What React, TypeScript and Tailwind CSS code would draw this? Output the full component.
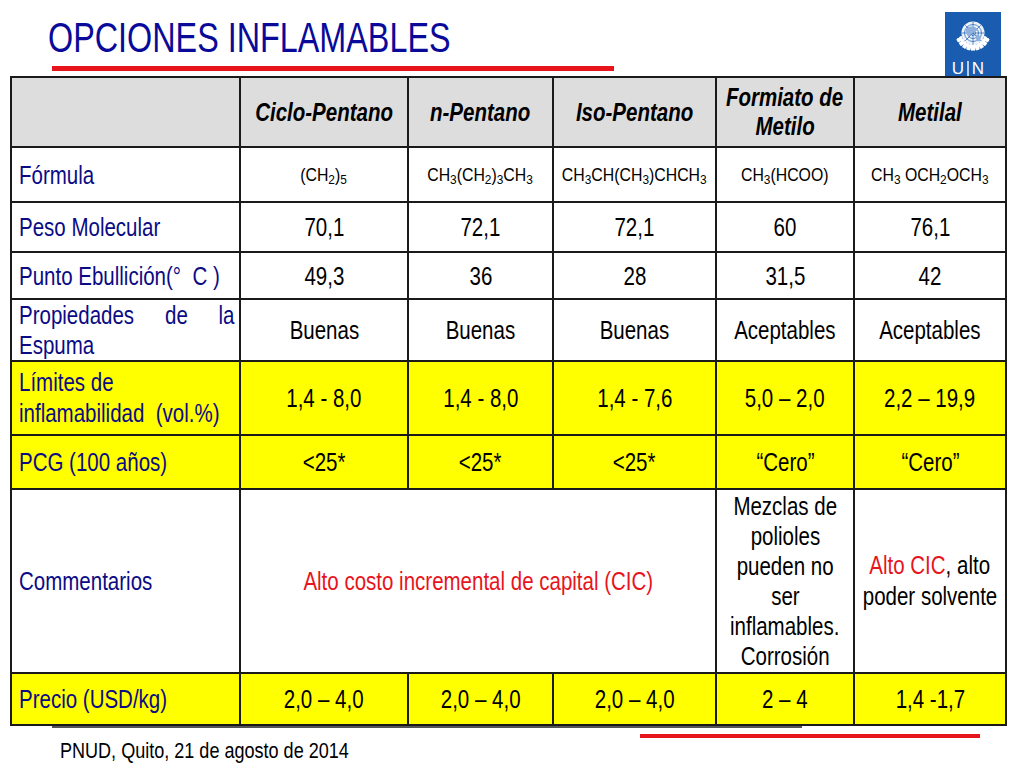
import React from "react";

const FONT = '"Liberation Sans", Arial, sans-serif';

function UNLogo() {
  const leaves: React.ReactNode[] = [];
  for (let side = -1; side <= 1; side += 2) {
    for (let i = 0; i < 9; i++) {
      const deg = 115 + i * 16;
      const a = deg * (Math.PI / 180);
      const r = 14.5;
      const x = side * Math.sin(a) * r;
      const y = -Math.cos(a) * r;
      leaves.push(
        <ellipse
          key={`${side}-${i}`}
          cx={x}
          cy={y}
          rx={1.7}
          ry={3.6}
          fill="white"
          transform={`rotate(${side * (deg + 30)} ${x} ${y})`}
        />
      );
    }
  }
  const radials = [0, 45, 90, 135, 180, 225, 270, 315].map((d) => {
    const a = (d * Math.PI) / 180;
    return (
      <line
        key={d}
        x1={0}
        y1={0}
        x2={Math.cos(a) * 11}
        y2={Math.sin(a) * 11}
        stroke="#1a5db0"
        strokeWidth={0.7}
      />
    );
  });
  return (
    <svg width="56" height="64" viewBox="0 0 56 64">
      <rect width="56" height="64" fill="#1a5db0" />
      <g transform="translate(28,21)">
        <circle r="11.5" fill="#eef3fa" />
        <circle r="8.5" fill="none" stroke="#1a5db0" strokeWidth="0.7" />
        <circle r="5.5" fill="none" stroke="#1a5db0" strokeWidth="0.7" />
        <circle r="2.5" fill="none" stroke="#1a5db0" strokeWidth="0.7" />
        {radials}
        <path d="M-7 -4 C-4 -8 2 -7 5 -3 C2 -1 -1 0 -3 3 C-6 2 -8 -1 -7 -4 Z" fill="#8fb0dc" />
        <path d="M3 2 C6 1 9 4 7 8 C4 9 2 6 3 2 Z" fill="#8fb0dc" />
        {leaves}
        <path d="M-6 15 Q0 12 6 15" stroke="white" strokeWidth="1.2" fill="none" />
      </g>
      <line x1="23" y1="49" x2="23" y2="64" stroke="white" strokeWidth="1.4" />
      <text x="13" y="61.5" fill="white" fontSize="17" fontFamily='"Liberation Sans", Arial, sans-serif' textAnchor="middle">U</text>
      <text x="33" y="61.5" fill="white" fontSize="17" fontFamily='"Liberation Sans", Arial, sans-serif' textAnchor="middle">N</text>
    </svg>
  );
}

/* narrow text: the reference uses a condensed face; emulate it by compressing horizontally */
function C({ children }: { children: React.ReactNode }) {
  return <span className="inline-block whitespace-nowrap scale-x-[0.82] origin-center">{children}</span>;
}
function L({ children }: { children: React.ReactNode }) {
  return <span className="inline-block whitespace-nowrap scale-x-[0.82] origin-left">{children}</span>;
}
function R({ children }: { children: React.ReactNode }) {
  return <span className="inline-block whitespace-nowrap scale-x-[0.82] origin-right">{children}</span>;
}
function F({ children }: { children: React.ReactNode }) {
  return <span className="inline-block whitespace-nowrap scale-x-[0.88] origin-center">{children}</span>;
}

const cellBase = "border-2 border-[#1a1a1a] align-middle";
const lbl = "border-2 border-[#1a1a1a] align-middle pl-[7px] pr-[5px] text-[#0b0b85]";

function V({ children }: { children: React.ReactNode }) {
  return (
    <td className={cellBase}>
      <div className="flex justify-center">
        <C>{children}</C>
      </div>
    </td>
  );
}

function Lines({ lines }: { lines: React.ReactNode[] }) {
  return (
    <div className="flex flex-col items-center">
      {lines.map((l, i) => (
        <C key={i}>{l}</C>
      ))}
    </div>
  );
}

function Formula({ children }: { children: React.ReactNode }) {
  return (
    <td className={`${cellBase} text-[18px] leading-[24px]`}>
      <div className="flex justify-center">
        <F>{children}</F>
      </div>
    </td>
  );
}

function Label({ children }: { children: React.ReactNode }) {
  return (
    <td className={lbl}>
      <div className="flex">
        <L>{children}</L>
      </div>
    </td>
  );
}

export default function App() {
  return (
    <div className="w-[1024px] h-[768px] bg-white overflow-hidden text-black" style={{ fontFamily: FONT }}>
      <div className="flex h-[76px]">
        <div className="flex flex-col pl-[48px] pt-[17px]">
          <h1 className="flex text-[42px] leading-[42px] text-[#0a0a9a]">
            <span className="inline-block whitespace-nowrap scale-x-[0.77] origin-left">OPCIONES INFLAMABLES</span>
          </h1>
          <div className="ml-[4px] mt-[7px] w-[562px] h-[5px] bg-[#e8141c]" />
        </div>
        <div className="ml-auto mr-[23px] mt-[12px]">
          <UNLogo />
        </div>
      </div>

      <table className="ml-[10px] w-[995px] table-fixed border-collapse border-2 border-[#333] text-[25px] leading-[30px]">
        <colgroup>
          <col className="w-[229px]" />
          <col className="w-[168px]" />
          <col className="w-[145px]" />
          <col className="w-[163px]" />
          <col className="w-[138px]" />
          <col className="w-[152px]" />
        </colgroup>
        <tbody>
          <tr className="h-[70px] bg-[#dddddd] font-bold italic leading-[29px]">
            <td className={cellBase}></td>
            <V>Ciclo-Pentano</V>
            <V>n-Pentano</V>
            <V>Iso-Pentano</V>
            <td className={cellBase}>
              <Lines lines={["Formiato de", "Metilo"]} />
            </td>
            <V>Metilal</V>
          </tr>
          <tr className="h-[55px]">
            <Label>Fórmula</Label>
            <Formula>
              (CH<sub>2</sub>)<sub>5</sub>
            </Formula>
            <Formula>
              CH<sub>3</sub>(CH<sub>2</sub>)<sub>3</sub>CH<sub>3</sub>
            </Formula>
            <Formula>
              CH<sub>3</sub>CH(CH<sub>3</sub>)CHCH<sub>3</sub>
            </Formula>
            <Formula>
              CH<sub>3</sub>(HCOO)
            </Formula>
            <Formula>
              CH<sub>3</sub> OCH<sub>2</sub>OCH<sub>3</sub>
            </Formula>
          </tr>
          <tr className="h-[50px]">
            <Label>Peso Molecular</Label>
            <V>70,1</V>
            <V>72,1</V>
            <V>72,1</V>
            <V>60</V>
            <V>76,1</V>
          </tr>
          <tr className="h-[47px]">
            <td className={lbl}>
              <div className="flex">
                <span className="inline-block whitespace-pre scale-x-[0.82] origin-left">{"Punto Ebullición(°  C )"}</span>
              </div>
            </td>
            <V>49,3</V>
            <V>36</V>
            <V>28</V>
            <V>31,5</V>
            <V>42</V>
          </tr>
          <tr className="h-[61px]">
            <td className={`${lbl} leading-[30px]`}>
              <div className="flex flex-col">
                <div className="flex">
                  <L>Propiedades</L>
                  <div className="ml-[6px] flex">
                    <L>de</L>
                  </div>
                  <div className="ml-auto flex">
                    <R>la</R>
                  </div>
                </div>
                <div className="flex">
                  <L>Espuma</L>
                </div>
              </div>
            </td>
            <V>Buenas</V>
            <V>Buenas</V>
            <V>Buenas</V>
            <V>Aceptables</V>
            <V>Aceptables</V>
          </tr>
          <tr className="h-[74px] bg-[#ffff00]">
            <td className={`${lbl} leading-[31px]`}>
              <div className="flex flex-col items-start">
                <L>Límites de</L>
                <span className="inline-block whitespace-pre scale-x-[0.82] origin-left">{"inflamabilidad  (vol.%)"}</span>
              </div>
            </td>
            <V>1,4 - 8,0</V>
            <V>1,4 - 8,0</V>
            <V>1,4 - 7,6</V>
            <V>5,0 – 2,0</V>
            <V>2,2 – 19,9</V>
          </tr>
          <tr className="h-[54px] bg-[#ffff00]">
            <Label>PCG (100 años)</Label>
            <V>&lt;25*</V>
            <V>&lt;25*</V>
            <V>&lt;25*</V>
            <V>“Cero”</V>
            <V>“Cero”</V>
          </tr>
          <tr className="h-[184px]">
            <Label>Commentarios</Label>
            <td className={`${cellBase} text-[#e8141c]`} colSpan={3}>
              <div className="flex justify-center">
                <C>Alto costo incremental de capital (CIC)</C>
              </div>
            </td>
            <td className={cellBase}>
              <Lines lines={["Mezclas de", "polioles", "pueden no", "ser", "inflamables.", "Corrosión"]} />
            </td>
            <td className={`${cellBase} leading-[31px]`}>
              <Lines
                lines={[
                  <>
                    <span className="text-[#e8141c]">Alto CIC</span>, alto
                  </>,
                  "poder solvente",
                ]}
              />
            </td>
          </tr>
          <tr className="h-[52px] bg-[#ffff00]">
            <Label>Precio (USD/kg)</Label>
            <V>2,0 – 4,0</V>
            <V>2,0 – 4,0</V>
            <V>2,0 – 4,0</V>
            <V>2 – 4</V>
            <V>1,4 -1,7</V>
          </tr>
        </tbody>
      </table>

      <div className="ml-[52px] w-[750px] h-[2px] bg-[#555]" />
      <div className="ml-[640px] mt-[6px] w-[340px] h-[4px] bg-[#e8141c]" />
      <div className="flex ml-[60px] mt-[1px] text-[22px] leading-[24px]">
        <L>PNUD, Quito, 21 de agosto de 2014</L>
      </div>
    </div>
  );
}
